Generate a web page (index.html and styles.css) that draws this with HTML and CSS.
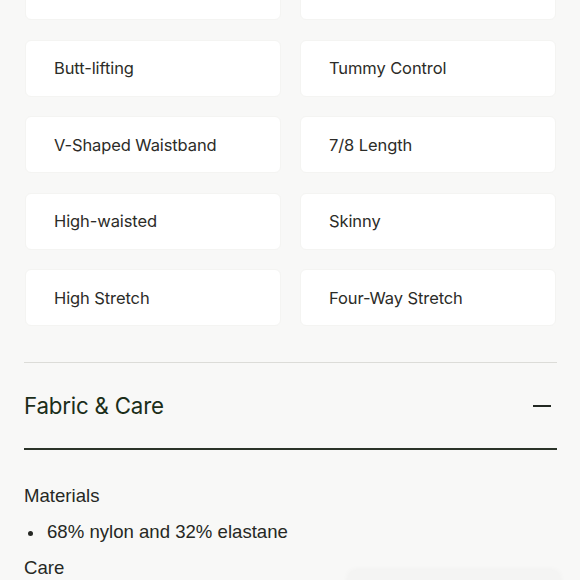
FILE: index.html
```html
<!DOCTYPE html>
<html>
<head>
<meta charset="utf-8">
<link rel="stylesheet" href="styles.css">
</head>
<body>
<div class="page">
  <div class="features">
    <div class="card"></div>
    <div class="card"></div>
    <div class="card">Butt-lifting</div>
    <div class="card">Tummy Control</div>
    <div class="card">V-Shaped Waistband</div>
    <div class="card">7/8 Length</div>
    <div class="card">High-waisted</div>
    <div class="card">Skinny</div>
    <div class="card">High Stretch</div>
    <div class="card">Four-Way Stretch</div>
  </div>
  <div class="accordion">
    <div class="acc-head">
      <span class="acc-title">Fabric &amp; Care</span>
      <span class="minus"></span>
    </div>
    <div class="acc-body">
      <div class="sub">Materials</div>
      <ul class="list">
        <li>68% nylon and 32% elastane</li>
      </ul>
      <div class="sub">Care</div>
    </div>
  </div>
</div>
<div class="floating"></div>
</body>
</html>
```

FILE: styles.css
```css
html, body {
  margin: 0;
  padding: 0;
  background: #f8f8f7;
  overflow: hidden;
  height: 580px;
}
.page {
  padding: 0 23px 0 24px;
}
.features {
  margin-top: -37px;
  display: grid;
  grid-template-columns: 1fr 1fr;
  column-gap: 19px;
  row-gap: 19.5px;
  padding: 0 1px;
}
.card {
  height: 57px;
  box-sizing: border-box;
  background: #ffffff;
  border: 1px solid #f4f4f2;
  border-radius: 6px;
  display: flex;
  align-items: center;
  padding-left: 28px;
  font-family: "Inter", "Liberation Sans", sans-serif;
  font-size: 16.5px;
  letter-spacing: -0.1px;
  color: #2c2c28;
}
.accordion {
  margin-top: 36px;
  border-top: 1px solid #dcdcd8;
}
.acc-head {
  height: 85px;
  display: flex;
  align-items: center;
  justify-content: space-between;
  border-bottom: 2px solid #2b3329;
}
.acc-title {
  font-family: "Inter", "Liberation Sans", sans-serif;
  font-size: 22.3px;
  color: #1b2e19;
  letter-spacing: -0.2px;
}
.minus {
  width: 18px;
  height: 2px;
  background: #222822;
  margin-right: 6px;
}
.acc-body {
  padding-top: 34px;
  font-family: "Liberation Sans", "Inter", sans-serif;
  font-size: 18.6px;
  color: #262824;
}
.sub {
  line-height: 24px;
}
.list {
  list-style: none;
  margin: 12px 0 12px 0;
  padding-left: 23px;
  line-height: 24px;
}
.list li {
  position: relative;
}
.list li::before {
  content: "";
  position: absolute;
  left: -19px;
  top: 11px;
  width: 5px;
  height: 5px;
  border-radius: 50%;
  background: #262824;
}
.floating {
  position: absolute;
  left: 348px;
  top: 570px;
  width: 212px;
  height: 40px;
  background: #f4f4f3;
  border-radius: 8px;
  box-shadow: 0 0 6px rgba(0,0,0,0.04);
}
```
